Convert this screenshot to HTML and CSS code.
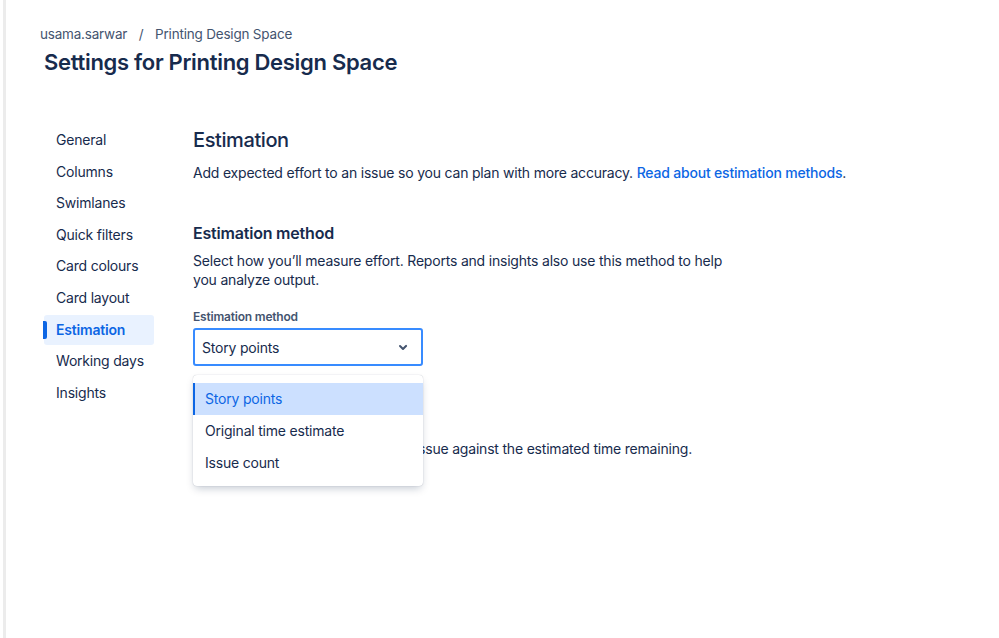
FILE: index.html
```html
<!DOCTYPE html>
<html lang="en">
<head>
  <meta charset="UTF-8">
  <title>Settings for Printing Design Space</title>
  <link rel="stylesheet" href="styles.css">
</head>
<body>
  <div class="page">
    <div class="breadcrumbs">
      <a href="#">usama.sarwar</a>
      <span class="sep">/</span>
      <a href="#">Printing Design Space</a>
    </div>
    <h1>Settings for Printing Design Space</h1>

    <div class="layout">
      <nav class="side-nav">
        <a href="#" class="nav-item">General</a>
        <a href="#" class="nav-item">Columns</a>
        <a href="#" class="nav-item">Swimlanes</a>
        <a href="#" class="nav-item">Quick filters</a>
        <a href="#" class="nav-item">Card colours</a>
        <a href="#" class="nav-item">Card layout</a>
        <a href="#" class="nav-item active">Estimation</a>
        <a href="#" class="nav-item">Working days</a>
        <a href="#" class="nav-item">Insights</a>
      </nav>

      <main class="content">
        <h2>Estimation</h2>
        <p class="intro">Add expected effort to an issue so you can plan with more accuracy. <a href="#">Read about estimation methods</a>.</p>

        <section class="block">
          <h3>Estimation method</h3>
          <p class="desc">Select how you’ll measure effort. Reports and insights also use this method to help you analyze output.</p>

          <label class="field-label">Estimation method</label>
          <div class="select-wrap">
            <div class="select">
              <span>Story points</span>
              <svg width="24" height="24" viewBox="0 0 24 24"><path d="M8.3 10.3a1 1 0 0 1 1.4 0L12 12.6l2.3-2.3a1 1 0 1 1 1.4 1.4l-3 3a1 1 0 0 1-1.4 0l-3-3a1 1 0 0 1 0-1.4z" fill="#44546f"/></svg>
            </div>
            <ul class="menu">
              <li class="option selected">Story points</li>
              <li class="option">Original time estimate</li>
              <li class="option">Issue count</li>
            </ul>
          </div>
        </section>

        <section class="block time">
          <h3>Time tracking</h3>
          <p class="desc">Members can log time used on an issue against the estimated time remaining.</p>
        </section>
      </main>
    </div>
  </div>
</body>
</html>
```

FILE: styles.css
```css
* {
  box-sizing: border-box;
}

body {
  margin: 0;
  padding-left: 3px;
  font-family: Inter, "Liberation Sans", sans-serif;
  color: #172b4d;
  background: #ffffff;
  letter-spacing: -0.2px;
}

a {
  text-decoration: none;
}

.page {
  border-left: 3px solid #ececec;
  min-height: 638px;
  padding: 24px 0 0 34px;
}

.breadcrumbs {
  font-size: 13.5px;
  line-height: 20px;
  color: #44546f;
}

.breadcrumbs a {
  color: #44546f;
}

.breadcrumbs .sep {
  margin: 0 8px;
}

h1 {
  margin: 2px 0 0 4px;
  font-size: 22px;
  line-height: 32px;
  font-weight: 600;
  letter-spacing: -0.3px;
}

.layout {
  display: flex;
  margin-top: 47px;
  padding-left: 4px;
}

.side-nav {
  width: 110px;
  display: flex;
  flex-direction: column;
  gap: 1.6px;
}

.nav-item {
  position: relative;
  display: block;
  height: 30px;
  line-height: 30px;
  padding-left: 12px;
  font-size: 14px;
  color: #172b4d;
  border-radius: 3px;
}

.nav-item.active {
  background: #e9f2ff;
  color: #0c66e4;
  font-weight: 600;
}

.nav-item.active::before {
  content: "";
  position: absolute;
  left: -1px;
  top: 6px;
  width: 4px;
  height: 18px;
  border-radius: 0 2px 2px 0;
  background: #0c66e4;
}

.content {
  margin-left: 39px;
  padding-top: 3px;
  flex: 1;
}

h2 {
  margin: 0;
  font-size: 20px;
  line-height: 24px;
  font-weight: 500;
  letter-spacing: -0.4px;
}

.intro {
  margin: 11px 0 0;
  font-size: 14px;
  line-height: 20px;
}

.intro a {
  color: #0c66e4;
  font-weight: 500;
}

.block {
  margin-top: 40px;
}

h3 {
  margin: 0;
  font-size: 16px;
  line-height: 20px;
  font-weight: 600;
}

.desc {
  margin: 8px 0 0;
  width: 540px;
  font-size: 14px;
  line-height: 19px;
}

.field-label {
  display: block;
  margin-top: 20px;
  font-size: 12px;
  line-height: 16px;
  font-weight: 600;
  color: #44546f;
}

.select-wrap {
  position: relative;
  width: 230px;
  margin-top: 3px;
}

.select {
  display: flex;
  align-items: center;
  justify-content: space-between;
  height: 38px;
  padding: 0 6px 0 7px;
  border: 2px solid #388bff;
  border-radius: 3px;
  font-size: 14px;
}

.menu {
  position: absolute;
  top: 47px;
  left: 0;
  width: 230px;
  margin: 0;
  padding: 8px 0 7px;
  list-style: none;
  background: #ffffff;
  border-radius: 4px;
  box-shadow: 0 4px 8px -2px rgba(9, 30, 66, 0.25), 0 0 1px rgba(9, 30, 66, 0.31);
  z-index: 2;
}

.option {
  height: 32px;
  line-height: 32px;
  padding-left: 10px;
  font-size: 14px;
  border-left: 2px solid transparent;
}

.option.selected {
  background: #cce0ff;
  color: #0c66e4;
  border-left-color: #0c66e4;
}

.block.time {
  margin-top: 45px;
}
```
